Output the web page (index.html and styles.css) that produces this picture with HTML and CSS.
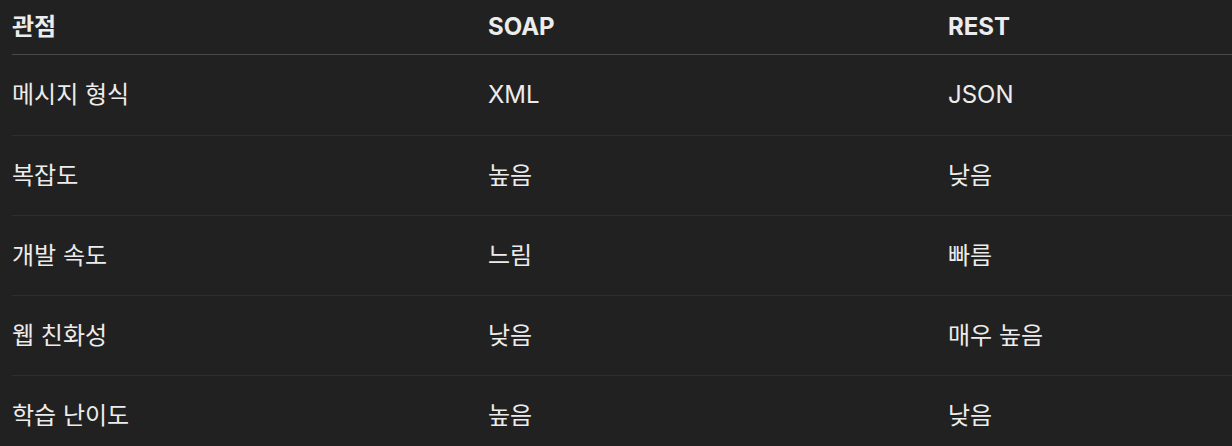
FILE: index.html
```html
<!DOCTYPE html>
<html lang="ko">
  <head>
    <meta charset="UTF-8" />
    <meta name="viewport" content="width=device-width, initial-scale=1.0" />
    <title>SOAP vs REST</title>
    <link rel="stylesheet" href="styles.css">
  </head>
  <body>
    <table class="compare">
      <colgroup>
        <col class="col-aspect" />
        <col class="col-soap" />
        <col />
      </colgroup>
      <thead>
        <tr>
          <th>관점</th>
          <th>SOAP</th>
          <th>REST</th>
        </tr>
      </thead>
      <tbody>
        <tr>
          <td>메시지 형식</td>
          <td>XML</td>
          <td>JSON</td>
        </tr>
        <tr>
          <td>복잡도</td>
          <td>높음</td>
          <td>낮음</td>
        </tr>
        <tr>
          <td>개발 속도</td>
          <td>느림</td>
          <td>빠름</td>
        </tr>
        <tr>
          <td>웹 친화성</td>
          <td>낮음</td>
          <td>매우 높음</td>
        </tr>
        <tr>
          <td>학습 난이도</td>
          <td>높음</td>
          <td>낮음</td>
        </tr>
      </tbody>
    </table>
  </body>
</html>
```

FILE: styles.css
```css
body {
  margin: 0;
  background-color: #212121;
  color: #ececec;
  font-family: "Inter", "Noto Sans CJK KR", sans-serif;
  font-size: 24px;
  overflow: hidden;
}

.compare {
  margin-left: 12px;
  width: calc(100% - 12px);
  border-collapse: collapse;
  table-layout: fixed;
}

.col-aspect {
  width: 476px;
}

.col-soap {
  width: 460px;
}

.compare th,
.compare td {
  padding: 0;
  text-align: left;
  vertical-align: middle;
  line-height: 32px;
}

.compare th {
  height: 54px;
  font-weight: 700;
  border-bottom: 1px solid #4a4a4a;
}

.compare td {
  height: 79px;
  font-weight: 400;
  border-bottom: 1px solid #2e2e2e;
}

.compare tbody tr:first-child td {
  height: 80px;
}
```
